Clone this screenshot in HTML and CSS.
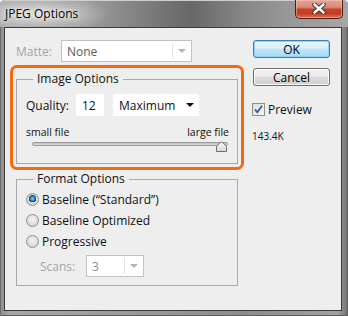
FILE: index.html
```html
<!DOCTYPE html>
<html>
<head>
<meta charset="utf-8">
<link rel="stylesheet" href="styles.css">
</head>
<body>
<div class="window">
  <div class="titlebar">
    <span class="title">JPEG Options</span>
    <div class="close">
      <svg width="14" height="11" viewBox="0 0 14 11">
        <path d="M2.5 1.5 L11.5 9.5 M11.5 1.5 L2.5 9.5" stroke="#3a2a28" stroke-width="4.4" stroke-linecap="round"/>
        <path d="M2.5 1.5 L11.5 9.5 M11.5 1.5 L2.5 9.5" stroke="#ffffff" stroke-width="2.6" stroke-linecap="round"/>
      </svg>
    </div>
  </div>
  <div class="client">
    <div class="main">
      <div class="matte-row">
        <span class="lbl disabled matte-lbl">Matte:</span>
        <div class="select disabled matte-sel">
          <span class="val">None</span>
          <span class="sep"></span>
          <span class="arrow light"></span>
        </div>
      </div>
      <div class="highlight">
        <fieldset class="group image-group">
          <legend>Image Options</legend>
          <div class="quality-row">
            <span class="lbl quality-lbl">Quality:</span>
            <div class="field qual-input">12</div>
            <div class="field qual-sel">
              <span class="val">Maximum</span>
              <span class="arrow dark"></span>
            </div>
          </div>
          <div class="size-labels"><span>small file</span><span>large file</span></div>
          <div class="slider">
            <div class="track"></div>
            <svg class="thumb" width="13" height="12" viewBox="0 0 13 12">
              <defs>
                <linearGradient id="tg" x1="0" y1="0" x2="0" y2="1">
                  <stop offset="0" stop-color="#fafafa"/>
                  <stop offset="1" stop-color="#d6d6d6"/>
                </linearGradient>
              </defs>
              <path d="M1.5 10.5 L1.5 6 Q1.5 5.2 2.2 4.6 L5.6 1.4 Q6.5 0.6 7.4 1.4 L10.8 4.6 Q11.5 5.2 11.5 6 L11.5 10.5 Z" fill="url(#tg)" stroke="#6f6f6f" stroke-width="1"/>
            </svg>
          </div>
        </fieldset>
      </div>
      <fieldset class="group format-group">
        <legend>Format Options</legend>
        <div class="radio-row"><span class="radio on"></span><span>Baseline (“Standard”)</span></div>
        <div class="radio-row"><span class="radio"></span><span>Baseline Optimized</span></div>
        <div class="radio-row"><span class="radio"></span><span>Progressive</span></div>
        <div class="scans-row">
          <span class="lbl disabled scans-lbl">Scans:</span>
          <div class="select disabled scans-sel">
            <span class="val">3</span>
            <span class="sep"></span>
            <span class="arrow light"></span>
          </div>
        </div>
      </fieldset>
    </div>
    <div class="side">
      <div class="btn ok">OK</div>
      <div class="btn cancel">Cancel</div>
      <div class="check-row">
        <span class="checkbox">
          <svg width="11" height="11" viewBox="0 0 11 11">
            <path d="M2 5.5 L4.3 8.3 L9 1.8" fill="none" stroke="#3b5a9a" stroke-width="1.8"/>
          </svg>
        </span>
        <span>Preview</span>
      </div>
      <div class="filesize">143.4K</div>
    </div>
  </div>
</div>
</body>
</html>
```

FILE: styles.css
```css
html, body {
  margin: 0;
  padding: 0;
  background: #ffffff;
}

body {
  font-family: "Open Sans", "Noto Sans", sans-serif;
  font-size: 12px;
  color: #111111;
}

.window {
  width: 348px;
  height: 316px;
  box-sizing: border-box;
  display: flex;
  flex-direction: column;
  background: linear-gradient(to right, #8e8e8e 0%, #a6a6a6 3%, #9a9a9a 40%, #8c8c8c 70%, #a2a2a2 97%, #6e6e6e 100%);
  border-radius: 5px 5px 0 0;
  box-shadow: inset 1px 0 0 #6d6d6d, inset -1px 0 0 #5e5e5e, inset 0 -1px 0 #5e5e5e;
}

.titlebar {
  height: 27px;
  flex: none;
  display: flex;
  align-items: flex-start;
  padding-left: 5px;
  border-radius: 5px 5px 0 0;
  background:
    radial-gradient(ellipse 70px 18px at 40px 14px, rgba(235,235,235,0.75), rgba(235,235,235,0) 100%),
    linear-gradient(to right, #aaaaaa 0%, #9d9d9d 25%, #727272 48%, #686868 55%, #8a8a8a 72%, #9a9a9a 85%, #a6a6a6 100%);
  box-shadow: inset 0 1px 0 #cfcfcf;
}

.title {
  margin-top: 6px;
  line-height: 16px;
  font-size: 12px;
  color: #000000;
  text-shadow: 0 0 4px #ffffff, 0 0 8px rgba(255,255,255,0.8);
}

.close {
  margin-left: auto;
  margin-right: 5px;
  width: 48px;
  height: 19px;
  box-sizing: border-box;
  border: 1px solid #4a1c13;
  border-top: none;
  border-radius: 0 0 5px 5px;
  background: linear-gradient(#e3a496 0%, #d98a76 40%, #c4442a 52%, #c43d22 75%, #d9735a 100%);
  box-shadow: inset 0 0 0 1px rgba(255,210,200,0.45);
  display: flex;
  align-items: center;
  justify-content: center;
}

.close svg {
  display: block;
  margin-top: -1px;
}

.client {
  flex: 1;
  margin: 0 6px 5px 4px;
  border: 1px solid #3a3a3a;
  background: #eeeeee;
  display: flex;
}

.main {
  width: 239px;
  box-sizing: border-box;
  padding: 12px 0 0 5px;
  flex: none;
}

.lbl {
  display: inline-block;
}

.disabled {
  color: #a4a4a4;
}

.matte-row {
  display: flex;
  align-items: center;
  padding-left: 6px;
  height: 22px;
}

.matte-lbl {
  width: 45px;
}

.select {
  height: 22px;
  box-sizing: border-box;
  border: 1px solid #c2c2c2;
  background: #ffffff;
  display: flex;
  align-items: center;
}

.select .val {
  flex: 1;
  padding-left: 5px;
  color: #5a5a5a;
}

.select .sep {
  width: 1px;
  align-self: stretch;
  margin: 2px 0;
  background: #e4e4e4;
}

.arrow {
  width: 0;
  height: 0;
  border-left: 4px solid transparent;
  border-right: 4px solid transparent;
  border-top: 4px solid #b5b5b5;
}

.arrow.light {
  margin: 0 5px 0 5px;
}

.arrow.dark {
  border-top: 4px solid #111111;
  margin-right: 5px;
}

.matte-sel {
  width: 131px;
}

.highlight {
  margin-top: 3px;
  width: 234px;
  box-sizing: border-box;
  border: 3px solid #f5690f;
  border-radius: 7px;
  padding: 4px 3px 3px 3px;
}

fieldset.group {
  margin: 0;
  border: 1px solid #a9a9a9;
  padding: 8px 8px 10px 9px;
  min-width: 0;
}

fieldset.group legend {
  padding: 0 4px;
  margin-left: 7px;
  line-height: 14px;
  font-size: 12px;
  color: #111111;
}

.quality-row {
  display: flex;
  align-items: center;
  height: 22px;
}

.quality-lbl {
  width: 50px;
  font-size: 12px;
}

.field {
  height: 22px;
  box-sizing: border-box;
  background: #ffffff;
  display: flex;
  align-items: center;
}

.qual-input {
  width: 28px;
  padding-left: 6px;
}

.qual-sel {
  width: 86px;
  margin-left: 9px;
}

.qual-sel .val {
  flex: 1;
  padding-left: 6px;
}

.size-labels {
  margin-top: 10px;
  display: flex;
  justify-content: space-between;
  font-size: 10.5px;
  line-height: 12px;
}

.slider {
  position: relative;
  height: 11px;
}

.track {
  margin: 4px 1px 0 6px;
  height: 4px;
  box-sizing: border-box;
  border: 1px solid #9c9c9c;
  border-radius: 2px;
  background: linear-gradient(#bdbdbd, #dcdcdc);
}

.thumb {
  position: absolute;
  right: 1px;
  top: -1px;
  display: block;
}

fieldset.format-group {
  margin: 2px 0 0 6px;
  width: 222px;
  box-sizing: border-box;
  padding: 3px 8px 8px 9px;
}

.radio-row {
  display: flex;
  align-items: center;
  height: 21px;
  gap: 3px;
}

.radio {
  width: 13px;
  height: 13px;
  box-sizing: border-box;
  border-radius: 50%;
  border: 1px solid #8e8f8f;
  background: radial-gradient(circle at 50% 40%, #f4f4f4 0%, #dcdcdc 60%, #c8c8c8 100%);
  flex: none;
}

.radio.on {
  background:
    radial-gradient(circle at 50% 42%, #8fd0f4 0%, #2b8ad0 25%, #0e3c66 42%, rgba(14,60,102,0) 45%),
    radial-gradient(circle at 50% 40%, #f4f4f4 0%, #dcdcdc 60%, #c8c8c8 100%);
}

.scans-row {
  margin-top: 3px;
  display: flex;
  align-items: center;
  height: 22px;
  padding-left: 14px;
}

.scans-lbl {
  width: 46px;
}

.scans-sel {
  width: 58px;
}

.scans-sel .val {
  color: #8a8a8a;
}

.side {
  margin-left: 9px;
  padding-top: 12px;
  display: flex;
  flex-direction: column;
  align-items: flex-start;
}

.btn {
  width: 77px;
  height: 18px;
  box-sizing: border-box;
  border-radius: 3px;
  display: flex;
  align-items: center;
  justify-content: center;
  font-size: 12px;
  color: #000000;
}

.ok {
  border: 1px solid #3c7fb1;
  background: linear-gradient(#eaf6fd 0%, #d9f0fc 45%, #bee6fd 50%, #a7d9f5 100%);
  box-shadow: inset 0 0 0 1px #8fd3f9;
}

.cancel {
  margin-top: 10px;
  border: 1px solid #707070;
  background: linear-gradient(#f2f2f2 0%, #ebebeb 45%, #dddddd 50%, #cfcfcf 100%);
  box-shadow: inset 0 0 0 1px #fbfbfb;
}

.check-row {
  margin-top: 16px;
  margin-left: -1px;
  display: flex;
  align-items: center;
  gap: 3px;
  height: 14px;
}

.checkbox {
  width: 13px;
  height: 13px;
  box-sizing: border-box;
  border: 1px solid #8e8f8f;
  background: linear-gradient(135deg, #dcdcdc, #f6f6f6);
  display: flex;
  align-items: center;
  justify-content: center;
}

.checkbox svg {
  display: block;
}

.filesize {
  margin-top: 14px;
  margin-left: -1px;
  font-size: 10px;
  line-height: 12px;
}
```
